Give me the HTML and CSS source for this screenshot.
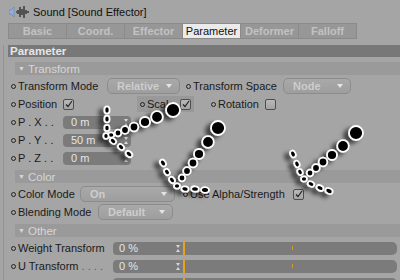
FILE: index.html
```html
<!DOCTYPE html>
<html lang="en">
<head>
    <meta charset="UTF-8">
    <meta name="viewport" content="width=device-width, initial-scale=1.0">
    <title>Sound [Sound Effector]</title>

    <link rel="stylesheet" href="styles.css">
</head>
<body>

    <div class="title">
        <svg class="icon" width="20" height="14" viewBox="0 0 20 14">
            <path d="M0 5h2l3-3v10l-3-3H0z" fill="#8fb0e0" stroke="#5a7fb8" stroke-width="0.6"/>
            <path d="M7 7h1M9 5v4M11 2v10M13 4v6M15 1v12M17 5v4M19 6v2" stroke="#111" stroke-width="1.1"/>
        </svg>
        <span>Sound [Sound Effector]</span>
    </div>

    <div class="tabs">
        <div class="tab">Basic</div>
        <div class="tab">Coord.</div>
        <div class="tab">Effector</div>
        <div class="tab active">Parameter</div>
        <div class="tab">Deformer</div>
        <div class="tab">Falloff</div>
    </div>

    <div class="panel">
        <div class="bar">Parameter</div>

        <div class="group first"><span class="tri">▼</span>Transform</div>
        <div class="row">
            <span class="dot"></span><span class="label w89">Transform Mode</span>
            <div class="select w73">Relative</div>
            <span class="dot gap6"></span><span class="label w90">Transform Space</span>
            <div class="select w68">Node</div>
        </div>
        <div class="row">
            <span class="dot"></span><span class="label w45">Position</span>
            <span class="check on"><svg width="8" height="8" viewBox="0 0 8 8"><path d="M1 4.5l2 2L7 1" fill="none" stroke="#222" stroke-width="1.2"/></svg></span>
            <div class="hot">
                <span class="dot"></span><span class="label w33">Scale</span>
                <span class="check on"><svg width="8" height="8" viewBox="0 0 8 8"><path d="M1 4.5l2 2L7 1" fill="none" stroke="#222" stroke-width="1.2"/></svg></span>
            </div>
            <span class="dot gap17"></span><span class="label w47">Rotation</span>
            <span class="check"></span>
        </div>
        <div class="row">
            <span class="dot"></span><span class="label w45">P . X . .</span>
            <div class="field w68">0 m<span class="spin"></span></div>
        </div>
        <div class="row">
            <span class="dot"></span><span class="label w45">P . Y . .</span>
            <div class="field w68">50 m<span class="spin"></span></div>
        </div>
        <div class="row">
            <span class="dot"></span><span class="label w45">P . Z . .</span>
            <div class="field w68">0 m<span class="spin"></span></div>
        </div>

        <div class="group"><span class="tri">▼</span>Color</div>
        <div class="row">
            <span class="dot"></span><span class="label w62">Color Mode</span>
            <div class="select w95">On</div>
            <span class="dot gap8"></span><span class="label w103">Use Alpha/Strength</span>
            <span class="check on"><svg width="8" height="8" viewBox="0 0 8 8"><path d="M1 4.5l2 2L7 1" fill="none" stroke="#222" stroke-width="1.2"/></svg></span>
        </div>
        <div class="row">
            <span class="dot"></span><span class="label w80">Blending Mode</span>
            <div class="select w75">Default</div>
        </div>

        <div class="group"><span class="tri">▼</span>Other</div>
        <div class="row">
            <span class="dot"></span><span class="label w95">Weight Transform</span>
            <div class="slider">
                <div class="num">0 %<span class="spin"></span></div>
                <div class="knob"></div>
                <div class="track"></div>
            </div>
        </div>
        <div class="row">
            <span class="dot"></span><span class="label w95">U Transform <span class="dim">. . . .</span></span>
            <div class="slider">
                <div class="num">0 %<span class="spin"></span></div>
                <div class="knob"></div>
                <div class="track"></div>
            </div>
        </div>
        <div class="row">
            <span class="blank"></span>
            <div class="slider">
                <div class="num"></div>
                <div class="knob"></div>
                <div class="track"></div>
            </div>
        </div>
    </div>

    <!-- hand drawn arrows on top of the screenshot -->
    <svg class="marks" width="400" height="280" viewBox="0 0 400 280">
        <defs>
            <filter id="sh" x="-50%" y="-50%" width="200%" height="200%">
                <feDropShadow dx="-5" dy="3" stdDeviation="2" flood-color="#000" flood-opacity="0.6"/>
            </filter>
        </defs>
        <g fill="#000" stroke="#fff" stroke-width="1.8" filter="url(#sh)">
            <circle cx="173" cy="110" r="7"/>
            <circle cx="157" cy="117" r="5.8"/>
            <circle cx="145" cy="122" r="5"/>
            <circle cx="134" cy="127" r="4.3"/>
            <circle cx="125" cy="130" r="3.8"/>
            <circle cx="118" cy="133" r="3.3"/>
            <ellipse cx="111" cy="135" rx="3.2" ry="2.6"/>
            <ellipse cx="107" cy="110" rx="2.6" ry="3.6"/>
            <ellipse cx="107" cy="119" rx="2.6" ry="3.4"/>
            <ellipse cx="107" cy="128" rx="2.6" ry="3.2"/>
            <ellipse cx="106" cy="136" rx="2.6" ry="2.8"/>
            <ellipse cx="113" cy="141" rx="3.4" ry="2.5" transform="rotate(40 113 141)"/>
            <ellipse cx="121" cy="147" rx="3.4" ry="2.5" transform="rotate(40 121 147)"/>
            <ellipse cx="129" cy="154" rx="3.6" ry="2.6" transform="rotate(40 129 154)"/>

            <circle cx="218" cy="128" r="7"/>
            <circle cx="208" cy="142" r="5.8"/>
            <circle cx="199" cy="154" r="5"/>
            <circle cx="193" cy="163" r="4.3"/>
            <circle cx="187" cy="171" r="3.8"/>
            <circle cx="182" cy="178" r="3.3"/>
            <ellipse cx="163" cy="163" rx="3.6" ry="2.6" transform="rotate(55 163 163)"/>
            <ellipse cx="167" cy="172" rx="3.4" ry="2.5" transform="rotate(55 167 172)"/>
            <ellipse cx="172" cy="180" rx="3.4" ry="2.5" transform="rotate(50 172 180)"/>
            <ellipse cx="177" cy="186" rx="3" ry="2.6"/>
            <ellipse cx="185" cy="189" rx="3.6" ry="2.6" transform="rotate(10 185 189)"/>
            <ellipse cx="195" cy="189" rx="3.8" ry="2.7" transform="rotate(5 195 189)"/>
            <ellipse cx="205" cy="190" rx="4" ry="2.8" transform="rotate(5 205 190)"/>

            <circle cx="356" cy="133" r="7"/>
            <circle cx="343" cy="146" r="5.8"/>
            <circle cx="332" cy="155" r="5"/>
            <circle cx="323" cy="162" r="4.3"/>
            <circle cx="316" cy="168" r="3.8"/>
            <circle cx="310" cy="173" r="3.3"/>
            <ellipse cx="293" cy="154" rx="3.6" ry="2.6" transform="rotate(65 293 154)"/>
            <ellipse cx="297" cy="164" rx="3.4" ry="2.5" transform="rotate(65 297 164)"/>
            <ellipse cx="300" cy="172" rx="3.2" ry="2.5" transform="rotate(60 300 172)"/>
            <ellipse cx="304" cy="179" rx="3" ry="2.6"/>
            <ellipse cx="311" cy="184" rx="3.4" ry="2.5" transform="rotate(25 311 184)"/>
            <ellipse cx="320" cy="188" rx="3.6" ry="2.6" transform="rotate(25 320 188)"/>
            <ellipse cx="329" cy="191" rx="3.8" ry="2.7" transform="rotate(25 329 191)"/>
        </g>
    </svg>

</body>
</html>
```

FILE: styles.css
```css
body {
    margin: 0;
    width: 400px;
    height: 280px;
    overflow: hidden;
    background-color: #a5a5a5;
    font-family: "Liberation Sans", Arial, sans-serif;
    font-size: 11px;
    color: #1a1a1a;
    position: relative;
}
.title {
    height: 23px;
    display: flex;
    align-items: center;
    padding-left: 9px;
    font-size: 11px;
    color: #111;
}
.icon {
    margin-right: 4px;
}
.tabs {
    display: flex;
    margin-left: 8px;
    height: 16px;
}
.tab {
    width: 57px;
    border: 1px solid #8a8a8a;
    border-left: none;
    background-color: #979797;
    color: #c2c2c2;
    font-weight: bold;
    text-align: center;
    line-height: 14px;
}
.tab:first-child {
    border-left: 1px solid #8a8a8a;
}
.tab.active {
    background-color: #ebebeb;
    color: #111;
    font-weight: normal;
}
.panel {
    margin-left: 3px;
    border-left: 1px solid #939393;
    padding-left: 4px;
}
.bar {
    margin-top: 6px;
    height: 12px;
    line-height: 12px;
    background-color: #787878;
    color: #e6e6e6;
    font-weight: bold;
    font-size: 11.5px;
    padding-left: 2px;
}
.group {
    margin: 3px 0 2px 7px;
    height: 13px;
    line-height: 13px;
    background-color: #9a9a9a;
    color: #d6d6d6;
    font-size: 11.5px;
    padding-left: 3px;
}
.group.first {
    margin-top: 5px;
}
.tri {
    font-size: 7px;
    vertical-align: 2px;
    margin-right: 3px;
}
.row {
    height: 18px;
    display: flex;
    align-items: center;
    padding-left: 3px;
    white-space: nowrap;
}
.dot {
    width: 3px;
    height: 3px;
    border: 1px solid #222;
    border-radius: 50%;
    margin-right: 2px;
    flex: none;
}
.blank {
    width: 102px;
    flex: none;
}
.label {
    flex: none;
    overflow: hidden;
}
.dim {
    color: #5c5c5c;
}
.w33 { width: 33px; }
.w45 { width: 45px; }
.w47 { width: 47px; }
.w62 { width: 62px; }
.w80 { width: 80px; }
.w89 { width: 89px; }
.w90 { width: 90px; }
.w95 { width: 95px; }
.w103 { width: 103px; }
.gap6 { margin-left: 6px; }
.gap8 { margin-left: 8px; }
.gap17 { margin-left: 17px; }
.select {
    flex: none;
    box-sizing: border-box;
    height: 16px;
    line-height: 14px;
    border: 1px solid #8c8c8c;
    border-radius: 5px;
    background: linear-gradient(#a9a9a9, #9e9e9e);
    color: #cdcdcd;
    font-weight: bold;
    padding-left: 9px;
    position: relative;
}
.select::after {
    content: "";
    position: absolute;
    right: 7px;
    top: 5px;
    border-left: 3px solid transparent;
    border-right: 3px solid transparent;
    border-top: 4px solid #e4e4e4;
}
.select.w73 { width: 73px; }
.select.w68 { width: 68px; }
.select.w95 { width: 95px; }
.select.w75 { width: 75px; }
.check {
    flex: none;
    box-sizing: border-box;
    width: 11px;
    height: 11px;
    border: 1px solid #4d4d4d;
    border-radius: 2px;
    background: linear-gradient(#b8b8b8, #a4a4a4);
    display: flex;
    align-items: center;
    justify-content: center;
}
.hot {
    display: flex;
    align-items: center;
    height: 16px;
    margin-left: 63px;
    padding: 0 3px 0 3px;
    background-color: #999;
}
.field {
    flex: none;
    box-sizing: border-box;
    height: 13px;
    line-height: 13px;
    border-radius: 4px;
    background-color: #7b7b7b;
    color: #e6e6e6;
    padding-left: 8px;
    position: relative;
}
.field.w68 { width: 68px; }
.spin {
    position: absolute;
    right: 3px;
    top: 3px;
    width: 0;
    height: 7px;
    border-left: 2px solid transparent;
    border-right: 2px solid transparent;
    border-top: 3px solid #d8d8d8;
    border-bottom: 3px solid #d8d8d8;
    box-sizing: border-box;
}
.slider {
    display: flex;
    height: 13px;
    width: 284px;
    flex: none;
}
.num {
    width: 70px;
    box-sizing: border-box;
    line-height: 13px;
    background-color: #7b7b7b;
    border-radius: 4px 0 0 4px;
    color: #e6e6e6;
    padding-left: 6px;
    position: relative;
}
.knob {
    width: 2px;
    background-color: #e8a21c;
}
.track {
    flex: 1;
    border-radius: 0 5px 5px 0;
    background: linear-gradient(90deg, transparent 107px, #d69a2a 107px, #d69a2a 108px, transparent 108px) no-repeat 0 4px / 100% 4px, #7b7b7b;
}
.marks {
    position: absolute;
    top: 0;
    left: 0;
    pointer-events: none;
}
```
